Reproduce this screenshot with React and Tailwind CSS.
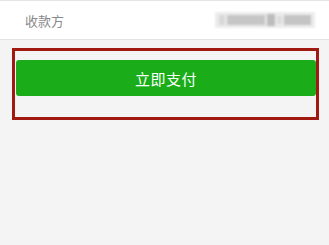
export default function App() {
  return (
    <div
      className="w-[329px] h-[245px] bg-[#f4f4f4] overflow-hidden"
      style={{ fontFamily: '"Noto Sans CJK SC", "Noto Sans", sans-serif' }}
    >
      <div className="h-px bg-[#e6e6e6]" />
      <div className="h-[39px] bg-white border-b border-[#e3e3e3] flex items-center justify-between pl-[25px] pr-[14px]">
        <span className="text-[13px] text-[#8a8a8a] leading-none">收款方</span>
        <div className="w-[100px] h-[16px] bg-[#ececec] blur-[1px] flex items-center gap-[2px] px-[4px]">
          <div className="w-[6px] h-[10px] bg-[#d8d8d8]" />
          <div className="w-[40px] h-[10px] bg-[#c6c6c6]" />
          <div className="w-[8px] h-[12px] bg-[#bdbdbd]" />
          <div className="w-[6px] h-[8px] bg-[#dcdcdc]" />
          <div className="w-[28px] h-[10px] bg-[#c4c4c4]" />
        </div>
      </div>
      <div className="ml-[12px] mt-[8px] w-[307px] border-[3px] border-[#a11a12] pl-px pt-[9px] pb-[21px]">
        <div className="h-[36px] w-[300px] rounded-[3px] bg-[#1aad19] flex items-center justify-center">
          <span className="text-[15px] text-white leading-none tracking-[0.5px]">立即支付</span>
        </div>
      </div>
    </div>
  );
}
